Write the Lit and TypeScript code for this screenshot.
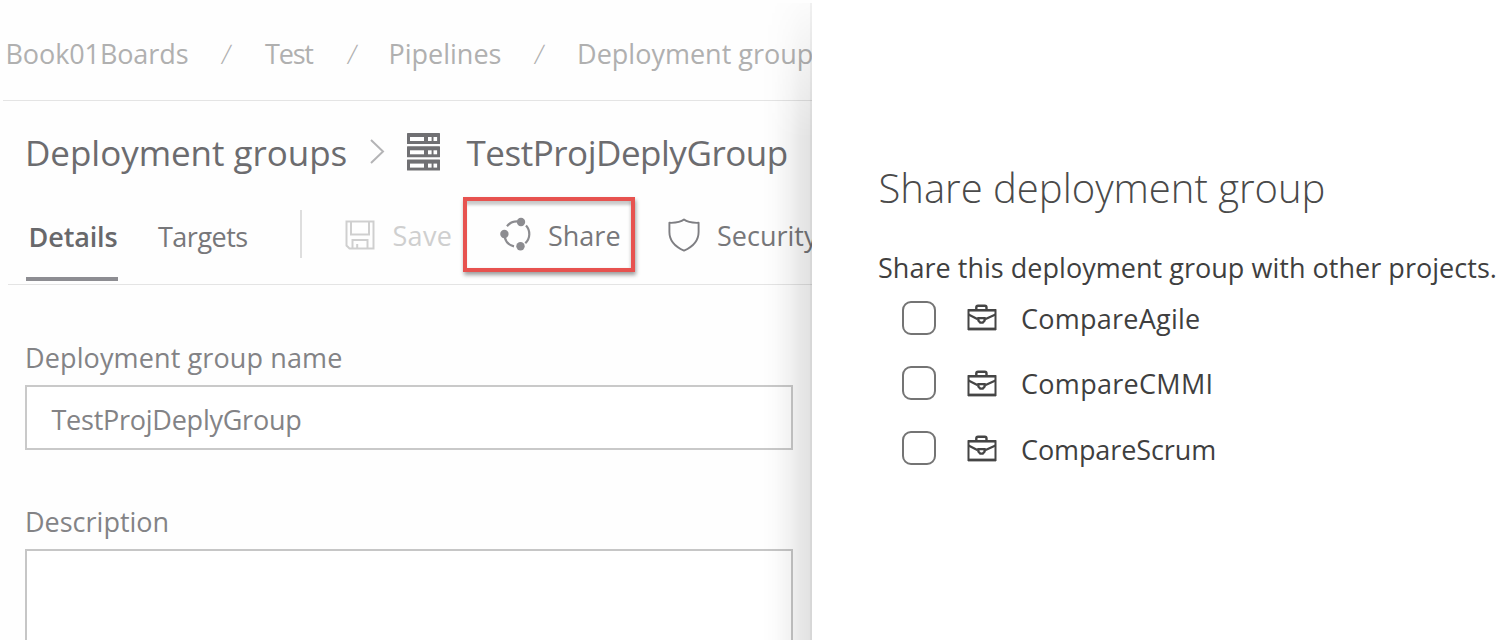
import { LitElement, html, css, svg } from "lit";
import { customElement, property } from "lit/decorators.js";

const serverUnit = (y: number) => svg`
  <rect x="0" y=${y} width="33" height="11" rx=".5" fill="#707073"/>
  <rect x="3" y=${y + 4} width="14" height="4" fill="#fff"/>
  <rect x="21" y=${y + 4} width="3.6" height="4" fill="#fff"/>
  <rect x="26.5" y=${y + 4} width="3.6" height="4" fill="#fff"/>`;

const chevronIcon = html`<svg width="16" height="26" viewBox="0 0 16 26" fill="none" stroke="#b4b4b6" stroke-width="2">
  <path d="M1 1 13 12.5 1 24"/></svg>`;

const serverIcon = html`<svg width="33" height="38" viewBox="0 0 33 38">
  ${serverUnit(0)}${serverUnit(13.3)}${serverUnit(26.6)}</svg>`;

const saveIcon = html`<svg width="30" height="30" viewBox="0 0 30 30" fill="none" stroke="#cfcfcf" stroke-width="2">
  <path d="M1.5 1.5H28.5V28.5H4.5L1.5 25.5Z"/><path d="M6 1.5V14.5H24V1.5"/><path d="M7.5 28.5V20H22.5V28.5"/><path d="M12.2 24V28.5"/></svg>`;

const shareIcon = html`<svg width="32" height="34" viewBox="0 0 32 34" fill="none" stroke="#8c8c90" stroke-width="2.2">
  <path d="M7 9.2A12.7 12.7 0 0 1 17 4.3"/>
  <path d="M26 8.5A12.7 12.7 0 0 1 25.3 26.3"/>
  <path d="M4.6 20A12.7 12.7 0 0 0 14 29.4"/>
  <g fill="#8c8c90" stroke="none"><circle cx="21" cy="5" r="4.2"/><circle cx="4.4" cy="17" r="4.2"/><circle cx="20.5" cy="29.3" r="4.2"/></g></svg>`;

const shieldIcon = html`<svg width="32" height="34" viewBox="0 0 32 34" fill="none" stroke="#7e7e82" stroke-width="1.9" stroke-linejoin="round">
  <path d="M16 1.6C12.5 4.4 7 5 1.4 4.8V14C1.4 22.5 6.5 28.5 16 32.6 25.5 28.5 30.6 22.5 30.6 14V4.8C25 5 19.5 4.4 16 1.6Z"/></svg>`;

const briefcaseIcon = html`<svg width="30" height="27" viewBox="0 0 30 27" fill="none" stroke="#454545" stroke-width="2">
  <path d="M1.5 6.2H28.5V25H1.5Z"/>
  <path d="M1 6.2H29" stroke-width="2.4"/>
  <path d="M9.3 5.5V3.6Q9.3 1.8 11 1.8H17.8Q19.5 1.8 19.5 3.6V5.5" stroke-width="2.4"/>
  <path d="M1.5 10.4 10.8 15.2M28.5 10.4 18 15.2" stroke-width="2.2"/>
  <path d="M11.4 14.2H17.6V16.6L15.8 18.6H13.2L11.4 16.6Z" stroke-width="2.3"/>
  <path d="M1 25H29" stroke-width="2.8"/></svg>`;

@customElement("project-option")
class ProjectOption extends LitElement {
  @property() name = "";
  @property({ type: Number }) tracking = 0;

  static styles = css`
    :host { display: grid; grid-template-columns: 65px 54px 1fr; align-items: center; height: 65.4px; }
    .check { width: 34px; height: 34px; box-sizing: border-box; margin: 0; appearance: none; border: 2px solid #747474; border-radius: 9px; background: #fff; }
    svg { display: block; }
    .name { line-height: 36px; padding-top: 2.4px; white-space: nowrap; }
  `;

  render() {
    return html`
      <input class="check" type="checkbox" aria-label=${this.name} />
      ${briefcaseIcon}
      <span class="name" style="letter-spacing:${this.tracking}px">${this.name}</span>
    `;
  }
}

@customElement("app-root")
class AppRoot extends LitElement {
  static styles = css`
    :host { display: block; width: 1500px; height: 644px; overflow: hidden; background: #fff; font: 27px/36px "Open Sans", "Noto Sans", sans-serif; color: #3f3f3f; }
    * { box-sizing: border-box; }
    svg { display: block; }
    .layout { display: grid; grid-template-columns: 812px 1fr; height: 640px; overflow: hidden; }
    .page { position: relative; height: 640px; overflow: hidden; background: #fefefe; white-space: nowrap; }
    .shade { position: absolute; top: 3px; right: 0; bottom: 0; width: 50px; pointer-events: none;
      background: linear-gradient(90deg, transparent, rgba(0,0,0,.01) 25%, rgba(0,0,0,.055) 60%, rgba(0,0,0,.085) 75%, rgba(0,0,0,.115));
      -webkit-mask-image: linear-gradient(rgba(0,0,0,.1), #000 135px); mask-image: linear-gradient(rgba(0,0,0,.1), #000 135px); }
    .edge { position: absolute; top: 3px; right: 0; bottom: 0; width: 2px; background: rgba(0,0,0,.045); }

    .crumbs { display: grid; grid-template-columns: 214.5px 45px 81px 42.5px 144.5px 43.5px auto; height: 101px; margin-left: 3px; padding: 36px 0 0 2.5px; border-bottom: 1px solid #e4e4e4; color: #b0b0b0; }
    .crumbs .first { letter-spacing: -.1px; }
    .crumbs .last { padding-left: .6px; }
    .slash { font-weight: 300; transform: skewX(-8deg); }
    .tight { letter-spacing: -1.2px; }

    .title { display: grid; grid-template-columns: 345px 36.5px 60px auto; height: 96px; padding-left: 25px; color: #6c6c6f; font-size: 35px; line-height: 48px; padding-top: 28px; }
    .title .chev { margin-top: 10px; }
    .title .srv { margin-top: 4px; }
    .groupname { letter-spacing: -.48px; }
    .title .parent { letter-spacing: -.04px; }

    .toolbar { display: grid; grid-template-columns: 132px 142px 45px 118px 172px 33px auto; height: 88px; margin-left: 8px; padding-left: 18px; border-bottom: 1px solid #e4e4e4; color: #77777a; }
    .tab { padding-top: 22px; letter-spacing: -.5px; }
    .tab.active { width: 92px; height: 84px; padding-left: 2.6px; letter-spacing: -.15px; font-weight: 600; color: #68686b; border-bottom: 4px solid #8d8d92; }
    .divider { width: 2px; height: 48px; margin-top: 13px; background: #dedede; }
    .action { display: flex; }
    .action svg { flex: none; margin-top: 20.5px; }
    .action span { padding-top: 21px; }
    .action.save { color: #cfcfcf; letter-spacing: .3px; }
    .action.save svg { margin-top: 23px; }
    .action.save span { margin-left: 17.5px; }
    .action.share { height: 75px; border: 4px solid #e7524f; padding-left: 33px; background: #fefefe; box-shadow: 1px 3px 4px rgba(0,0,0,.38), inset 0 5px 3px -1px rgba(0,0,0,.2), inset -2px 0 2px rgba(0,0,0,.08); }
    .action.share svg { margin-top: 16px; }
    .action.share span { padding-top: 17px; margin-left: 16px; }
    .action.security { grid-column: 7; }
    .action.security span { margin-left: 17px; }

    .form { padding-left: 25px; color: #838386; }
    .label { padding-top: 55px; letter-spacing: .12px; }
    .label.second { padding-top: 54px; letter-spacing: 0; }
    .field { width: 768px; height: 65px; margin-top: 9px; border: 2px solid #c9c9c9; background: #fff; padding: 15px 0 0 24.5px; letter-spacing: -.25px; }
    .area { width: 768px; height: 150px; margin-top: 9px; border: 2px solid #c6c6c6; background: #fff; }

    .panel { padding: 161px 0 0 66px; white-space: nowrap; }
    .heading { margin: 0 0 0 .5px; font-size: 40px; line-height: 54px; font-weight: 300; color: #4a4a4a; }
    .hint { margin: 35px 0 0; letter-spacing: .03px; }
    .options { padding-left: 24px; margin-top: -1px; }
  `;

  projects = [
    { name: "CompareAgile", tracking: 0.25 },
    { name: "CompareCMMI", tracking: 0.3 },
    { name: "CompareScrum", tracking: -0.1 },
  ];

  render() {
    return html`
      <div class="layout">
        <main class="page">
          <nav class="crumbs">
            <span class="first">Book01Boards</span><span class="slash">/</span>
            <span class="tight">Test</span><span class="slash">/</span>
            <span>Pipelines</span><span class="slash">/</span>
            <span class="last">Deployment groups</span>
          </nav>
          <header class="title">
            <span class="parent">Deployment groups</span>
            <span class="chev">${chevronIcon}</span>
            <span class="srv">${serverIcon}</span>
            <span class="groupname">TestProjDeplyGroup</span>
          </header>
          <div class="toolbar">
            <span class="tab active">Details</span>
            <span class="tab">Targets</span>
            <span class="divider"></span>
            <span class="action save">${saveIcon}<span>Save</span></span>
            <span class="action share">${shareIcon}<span>Share</span></span>
            <span class="action security">${shieldIcon}<span>Security</span></span>
          </div>
          <section class="form">
            <div class="label">Deployment group name</div>
            <div class="field">TestProjDeplyGroup</div>
            <div class="label second">Description</div>
            <div class="area"></div>
          </section>
          <div class="shade"></div>
          <div class="edge"></div>
        </main>
        <aside class="panel">
          <h2 class="heading">Share deployment group</h2>
          <p class="hint">Share this deployment group with other projects.</p>
          <div class="options">
            ${this.projects.map((p) => html`<project-option .name=${p.name} .tracking=${p.tracking}></project-option>`)}
          </div>
        </aside>
      </div>
    `;
  }
}
